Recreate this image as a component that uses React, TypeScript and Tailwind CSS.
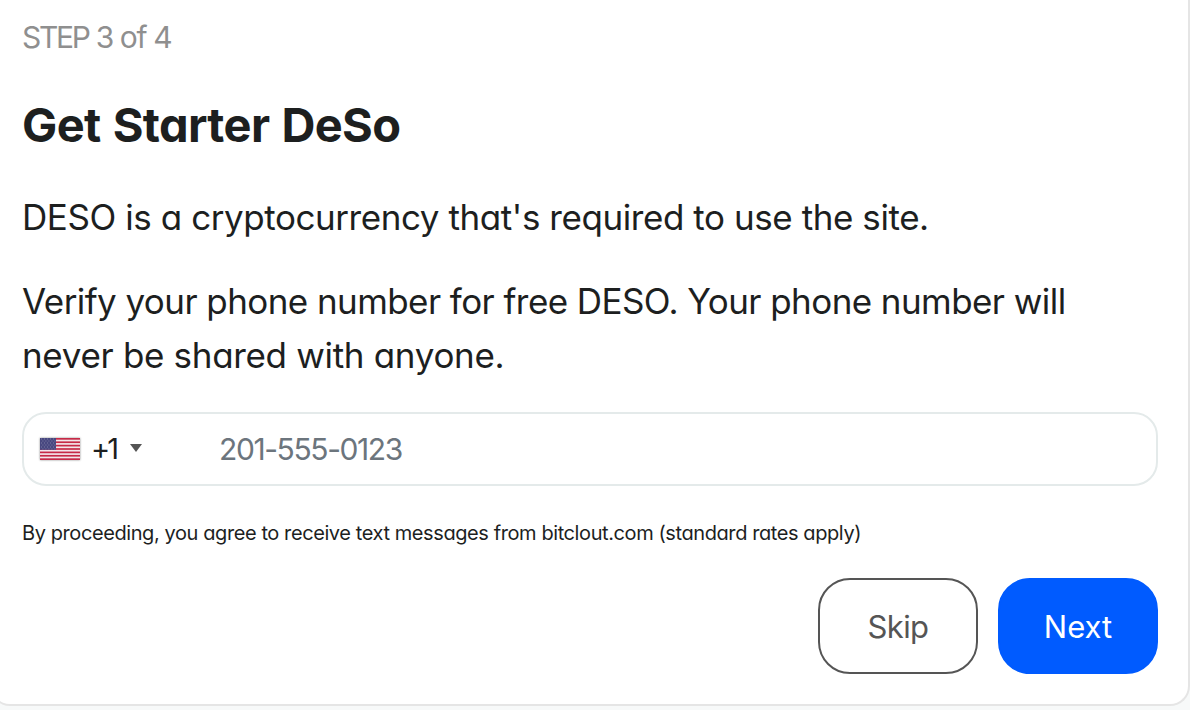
import { clsx } from "clsx";

const stripes = [0, 2, 4, 6, 8, 10, 12];
const starRows = [1, 3, 5, 7, 9, 11];

const Flag = () => (
  <svg
    viewBox="0 0 40 22"
    preserveAspectRatio="none"
    className="h-[22px] w-10 shadow-[0_0_2px_#888]"
  >
    <rect width="40" height="22" fill="#f3e6ea" />
    {stripes.map((i) => (
      <rect
        key={i}
        y={(i * 22) / 13}
        width="40"
        height={22 / 13}
        fill="#c62a47"
      />
    ))}
    <rect width="16" height="11.8" fill="#484880" />
    {starRows.map((y, row) =>
      [1, 4, 7, 10, 13].map((x) => (
        <rect
          key={`${x}-${y}`}
          x={x + (row % 2) * 1.5}
          y={y - 0.4}
          width="0.8"
          height="0.8"
          fill="#9a9abb"
        />
      ))
    )}
  </svg>
);

const Button = ({ label, primary }: { label: string; primary?: boolean }) => (
  <button
    className={clsx(
      "flex h-24 w-40 items-center justify-center rounded-[32px] border-2 pt-0.5 text-[31px]",
      primary
        ? "border-[#005bff] bg-[#005bff] text-white"
        : "border-[#555] bg-white tracking-[-0.6px] text-[#555]"
    )}
  >
    {label}
  </button>
);

const App = () => {
  return (
    <div className="h-[710px] overflow-hidden bg-[#f7f9f9] font-['Inter',sans-serif] text-[#1d1f1f] [font-feature-settings:'cv11']">
      <div className="-ml-2.5 h-[706px] w-[1200px] rounded-b-[20px] border-2 border-t-0 border-[#e5e5e5] bg-white pr-[30px] pl-[30px]">
        <div className="pt-[15px] text-[30px] leading-[44px] tracking-[-1.4px] text-[#8f8f8f]">
          <span className="tracking-[-2.3px]">STEP</span> 3 of 4
        </div>
        <h1 className="mt-[34px] text-[47px] leading-[64px] font-bold tracking-[-0.62px] [word-spacing:1.5px]">
          Get Starter DeSo
        </h1>
        <p className="mt-[33px] text-[35px] leading-[54px] tracking-[-0.43px] whitespace-nowrap">
          DESO is a cryptocurrency that's required to use the site.
        </p>
        <p className="mt-[30px] text-[35px] leading-[54px] whitespace-nowrap">
          <span className="tracking-[-0.57px]">
            Verify your phone number for free DESO. Your phone number will
          </span>
          <br />
          <span className="tracking-[-0.32px]">
            never be shared with anyone.
          </span>
        </p>
        <div className="mt-[30px] flex h-[74px] items-center rounded-[24px] border-2 border-[#e4eaea] pl-4 text-[29px]">
          <Flag />
          <span className="ml-[11px] w-[29px] tracking-[-3px]">+1</span>
          <svg viewBox="0 0 12 8" className="mb-0.5 ml-[10px] h-2 w-3">
            <path d="M0 0h12L6 8z" fill="#555" />
          </svg>
          <span className="ml-[77px] pt-px text-[30px] tracking-[-1.4px] text-[#6c757d]">
            201-555-0123
          </span>
        </div>
        <div className="mt-8 text-[20px] leading-[30px] tracking-[-0.41px] whitespace-nowrap">
          By proceeding, you agree to receive text messages from bitclout.com
          (standard rates apply)
        </div>
        <div className="mt-[30px] flex justify-end gap-5">
          <Button label="Skip" />
          <Button label="Next" primary />
        </div>
      </div>
    </div>
  );
};

export default App;
